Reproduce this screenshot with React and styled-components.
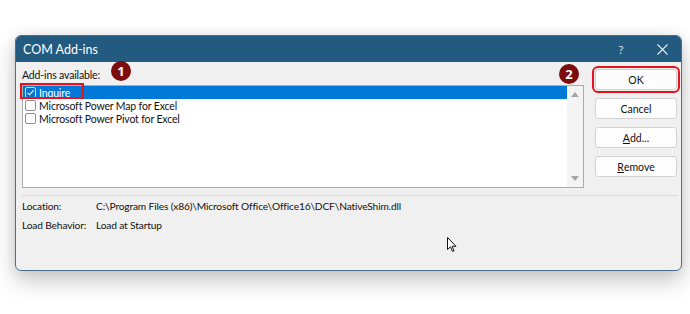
import React from "react";
import styled, { createGlobalStyle } from "styled-components";

const GlobalStyle = createGlobalStyle`
  html, body {
    margin: 0;
    padding: 0;
    background: #ffffff;
  }
  body {
    font-family: Lato, "Noto Sans", "Liberation Sans", sans-serif;
    color: #111111;
  }
`;

const addins = [
  { name: "Inquire", checked: true, selected: true },
  { name: "Microsoft Power Map for Excel", checked: false },
  { name: "Microsoft Power Pivot for Excel", checked: false },
];

function App() {
  return (
    <Page>
      <GlobalStyle />
      <Dialog>
        <TitleBar>
          <Title>COM Add-ins</Title>
          <TitleButtons>
            <HelpGlyph>?</HelpGlyph>
            <CloseGlyph>
              <svg width="11" height="11" viewBox="0 0 11 11">
                <path d="M0.5 0.5 L10.5 10.5 M10.5 0.5 L0.5 10.5" stroke="#e8eef3" strokeWidth="1.1" />
              </svg>
            </CloseGlyph>
          </TitleButtons>
        </TitleBar>

        <Body>
          <ListColumn>
            <Label>Add-ins available:</Label>
            <ListBox>
              <Rows>
                {addins.map((item) => (
                  <Row key={item.name} selected={item.selected}>
                    <Check checked={item.checked} selected={item.selected}>
                      {item.checked && (
                        <svg width="9" height="9" viewBox="0 0 9 9">
                          <path d="M1.5 4.8 L3.6 6.8 L7.6 2.2" fill="none" stroke="#ffffff" strokeWidth="1.1" />
                        </svg>
                      )}
                    </Check>
                    <RowText>{item.name}</RowText>
                    {item.selected && <Marker />}
                  </Row>
                ))}
              </Rows>
              <ScrollBar>
                <Arrow up />
                <Arrow />
              </ScrollBar>
            </ListBox>
            <Badge style={{ left: 89, top: -1 }}>1</Badge>
          </ListColumn>

          <ButtonColumn>
            <Badge style={{ left: -36, top: 2 }}>2</Badge>
            <Button highlighted>OK</Button>
            <Button>Cancel</Button>
            <Button>
              <u>A</u>dd...
            </Button>
            <Button>
              <u>R</u>emove
            </Button>
          </ButtonColumn>
        </Body>

        <Separator />

        <Info>
          <InfoLabel>Location:</InfoLabel>
          <InfoValue>C:\Program Files (x86)\Microsoft Office\Office16\DCF\NativeShim.dll</InfoValue>
          <InfoLabel>Load Behavior:</InfoLabel>
          <InfoValue>Load at Startup</InfoValue>
        </Info>

        <Cursor>
          <svg width="10" height="16" viewBox="0 0 10 16">
            <path d="M0.5 0.5 L0.5 12.5 L3.5 9.8 L5.5 14.5 L7 13.8 L5.2 9.3 L9 9.3 Z" fill="#ffffff" stroke="#111111" strokeWidth="1" />
          </svg>
        </Cursor>
      </Dialog>
    </Page>
  );
}

const Page = styled.div`
  padding: 35px 0 0 15px;
  height: 314px;
  box-sizing: border-box;
`;

const Dialog = styled.div`
  position: relative;
  width: 667px;
  height: 236px;
  box-sizing: border-box;
  background: #f0f0f0;
  border: 1px solid #4b6e8e;
  border-radius: 6px;
  box-shadow: 0 10px 22px rgba(0, 0, 0, 0.22), 0 0 12px rgba(0, 0, 0, 0.08);
`;

const TitleBar = styled.div`
  display: flex;
  align-items: center;
  justify-content: space-between;
  height: 26px;
  padding: 0 0 0 7px;
  background: #235a80;
  border-radius: 5px 5px 0 0;
  color: #ffffff;
`;

const Title = styled.span`
  font-size: 12.5px;
`;

const TitleButtons = styled.div`
  display: flex;
  align-items: center;
  height: 100%;
`;

const HelpGlyph = styled.span`
  width: 44px;
  text-align: center;
  font-size: 12px;
  color: #d5dfe8;
`;

const CloseGlyph = styled.span`
  display: flex;
  justify-content: center;
  width: 38px;
`;

const Body = styled.div`
  display: flex;
  gap: 11px;
  padding: 0 4px 0 6px;
`;

const ListColumn = styled.div`
  position: relative;
  display: flex;
  flex-direction: column;
  width: 562px;
  padding-top: 6px;
`;

const Label = styled.div`
  font-size: 10.5px;
  line-height: 14px;
  margin-bottom: 3px;
  letter-spacing: -0.15px;
`;

const ListBox = styled.div`
  display: flex;
  height: 103px;
  box-sizing: border-box;
  border: 1px solid #ababab;
  background: #ffffff;
`;

const Rows = styled.div`
  flex: 1;
`;

const Row = styled.div`
  position: relative;
  display: flex;
  align-items: center;
  gap: 3px;
  height: 13px;
  padding-left: 2px;
  background: ${(p) => (p.selected ? "#0078d7" : "transparent")};
  color: ${(p) => (p.selected ? "#ffffff" : "#111111")};
`;

const Check = styled.span`
  display: flex;
  align-items: center;
  justify-content: center;
  width: 11px;
  height: 11px;
  box-sizing: border-box;
  border: 1px solid ${(p) => (p.selected ? "#c9def2" : "#8f8f8f")};
  border-radius: 2px;
  background: ${(p) => (p.selected ? "#0a72c8" : "#ffffff")};
`;

const RowText = styled.span`
  font-size: 10.5px;
  line-height: 12px;
  letter-spacing: -0.15px;
`;

const Marker = styled.span`
  position: absolute;
  left: -3px;
  top: -3px;
  width: 60px;
  height: 12px;
  border: 2px solid #e5131d;
`;

const ScrollBar = styled.div`
  display: flex;
  flex-direction: column;
  justify-content: space-between;
  align-items: center;
  width: 16px;
  padding: 6px 0 6px;
  background: #f4f4f4;
`;

const Arrow = styled.span`
  width: 0;
  height: 0;
  border-left: 4px solid transparent;
  border-right: 4px solid transparent;
  ${(p) =>
    p.up
      ? "border-bottom: 5px solid #a6a6a6;"
      : "border-top: 5px solid #a6a6a6;"}
`;

const ButtonColumn = styled.div`
  position: relative;
  display: flex;
  flex-direction: column;
  gap: 8px;
  padding-top: 7px;
`;

const Button = styled.div`
  display: flex;
  align-items: center;
  justify-content: center;
  width: 82px;
  height: 21px;
  box-sizing: border-box;
  background: #fdfdfd;
  border: 1px solid #d3d3d3;
  border-radius: 3px;
  font-size: 10.5px;
  color: #111111;
  outline: ${(p) => (p.highlighted ? "2px solid #e5131d" : "none")};
  outline-offset: 1px;

  u {
    text-decoration-thickness: 1px;
    text-underline-offset: 1px;
  }
`;

const Badge = styled.span`
  position: absolute;
  display: flex;
  align-items: center;
  justify-content: center;
  width: 20px;
  height: 20px;
  border-radius: 50%;
  background: #7d0c0c;
  color: #ffffff;
  font-family: "Noto Sans", sans-serif;
  font-size: 13px;
  font-weight: 700;
`;

const Separator = styled.div`
  height: 1px;
  margin: 7px 3px 0 6px;
  background: #dadada;
`;

const Info = styled.div`
  display: grid;
  grid-template-columns: 74px auto;
  row-gap: 3px;
  padding: 2px 0 0 6px;
  font-size: 10.2px;
  line-height: 16px;
  letter-spacing: -0.15px;
  white-space: nowrap;
`;

const InfoLabel = styled.span``;

const InfoValue = styled.span``;

const Cursor = styled.span`
  position: absolute;
  left: 431px;
  top: 201px;
  line-height: 0;
`;

export default App;
